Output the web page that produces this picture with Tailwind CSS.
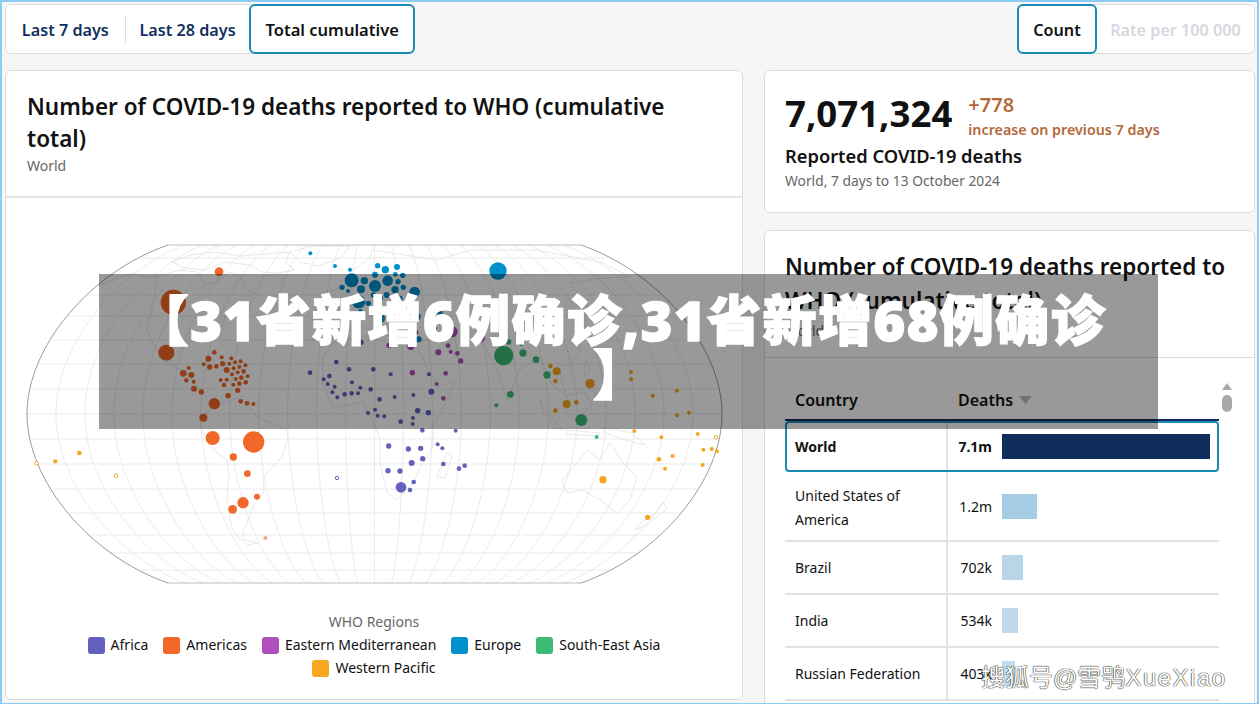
<!DOCTYPE html>
<html lang="en">
<head>
<meta charset="utf-8">
<title>COVID-19 deaths</title>
<script src="https://cdn.jsdelivr.net/npm/@tailwindcss/browser@4"></script>
</head>
<body class="m-0">
<div class="relative h-[704px] w-[1259px] overflow-hidden border-2 border-b-[1px] border-[#8ccbf3] bg-[#f6f6f7] pl-[3px] pr-[2px] pt-[2px] [font-family:'Noto_Sans','Noto_Sans_CJK_SC',sans-serif] text-[#111]">
  <div class="flex h-[50px] justify-between">
    <div class="flex h-full w-[410px] items-stretch rounded-md border border-[#dcdcdc] bg-white text-[16.2px] font-semibold text-[#12305e]">
      <div class="flex w-[119px] items-center justify-center pt-[2px]">Last 7 days</div>
      <div class="my-[10px] w-px bg-[#dcdcdc]"></div>
      <div class="flex w-[124px] items-center justify-center pt-[2px]">Last 28 days</div>
      <div class="-my-px -mr-px flex w-[166px] items-center justify-center rounded-md border-2 border-[#1b8bb5] bg-white pt-[2px] text-[16.5px] text-[#111]">Total cumulative</div>
    </div>
    <div class="flex h-full w-[238px] items-stretch rounded-md border border-[#dcdcdc] bg-white text-[16.2px] font-semibold">
      <div class="-my-px -ml-px flex w-[80px] items-center justify-center rounded-md border-2 border-[#1b8bb5] pt-[2px] text-[#111]">Count</div>
      <div class="flex flex-1 items-center justify-center pt-[2px] text-[#d5d8de]">Rate per 100 000</div>
    </div>
  </div>

  <div class="mt-[16px] flex items-start gap-[21px]">
    <!-- Left card -->
    <section class="h-[630px] w-[738px] shrink-0 rounded-md border border-[#dcdcdc] bg-white">
      <div class="h-[127px] border-b-2 border-[#e6e6e6] pl-[21px] pr-[60px] pt-[20px]">
        <h2 class="text-[22.5px] leading-[32px] font-semibold text-[#111]">Number of COVID-19 deaths reported to WHO (cumulative total)</h2>
        <p class="mt-[1px] text-[14px] leading-[20px] text-[#666]">World</p>
      </div>
      <svg class="block" width="736" height="414" viewBox="6 198 736 414" fill="none">
        <defs>
          <path id="m" d="M206.5 245C284.5 272 347.5 347 347.5 414C347.5 481 284.5 556 206.5 583" vector-effect="non-scaling-stroke"/>
        </defs>
        <g stroke="#e9e9e9" stroke-width="0.9">
          <path d="M374.5 245V583"/>
          <use href="#m" transform="translate(374.5 0) scale(.0833 1)"/><use href="#m" transform="translate(374.5 0) scale(-.0833 1)"/>
          <use href="#m" transform="translate(374.5 0) scale(.1667 1)"/><use href="#m" transform="translate(374.5 0) scale(-.1667 1)"/>
          <use href="#m" transform="translate(374.5 0) scale(.25 1)"/><use href="#m" transform="translate(374.5 0) scale(-.25 1)"/>
          <use href="#m" transform="translate(374.5 0) scale(.3333 1)"/><use href="#m" transform="translate(374.5 0) scale(-.3333 1)"/>
          <use href="#m" transform="translate(374.5 0) scale(.4167 1)"/><use href="#m" transform="translate(374.5 0) scale(-.4167 1)"/>
          <use href="#m" transform="translate(374.5 0) scale(.5 1)"/><use href="#m" transform="translate(374.5 0) scale(-.5 1)"/>
          <use href="#m" transform="translate(374.5 0) scale(.5833 1)"/><use href="#m" transform="translate(374.5 0) scale(-.5833 1)"/>
          <use href="#m" transform="translate(374.5 0) scale(.6667 1)"/><use href="#m" transform="translate(374.5 0) scale(-.6667 1)"/>
          <use href="#m" transform="translate(374.5 0) scale(.75 1)"/><use href="#m" transform="translate(374.5 0) scale(-.75 1)"/>
          <use href="#m" transform="translate(374.5 0) scale(.8333 1)"/><use href="#m" transform="translate(374.5 0) scale(-.8333 1)"/>
          <use href="#m" transform="translate(374.5 0) scale(.9167 1)"/><use href="#m" transform="translate(374.5 0) scale(-.9167 1)"/>
          <path d="M27 414H722M29 389H720M38 364H711M52 340H697M67 316H682M88 295H661M112 275H637M140 258H609"/>
          <path d="M29 439H720M38 464H711M52 489H697M68 513H681M88 535H661M110 553H639M138 570H611"/>
        </g>
        <!-- Coastlines -->
        <g stroke="#dedede" stroke-width="0.7" stroke-linejoin="round">
          <path d="M100 285L115 279 133 273 145 277 157 277 155 292 150 317 147 330 155 348 167 363 187 373 200 390 207 400 213 407 230 400 243 397 250 408 257 417 272 423 287 430 288 437 282 457 270 470 263 477 264 492 253 507 247 523 243 532 244 540 258 543 248 545 238 538 233 530 230 520 227 497 229 473 227 460 217 453 208 443 200 427 204 415 213 407"/>
          <path d="M167 363L177 353 187 343 200 338 213 337 222 325 227 313 240 303 253 293 245 288 240 275 228 272 217 282 205 285 198 272 180 270 157 277"/>
          <path d="M172 262L190 255 215 252 240 256 290 252 285 262 295 270 278 273 262 272 250 265 225 262 205 270 185 268Z"/>
          <path d="M323 357L333 343 350 338 363 337 380 334 413 340 427 367 438 387 457 380 447 400 433 427 433 447 423 463 413 483 397 500 387 493 380 463 380 437 370 417 363 402 333 408 323 383Z"/>
          <path d="M447 453L437 477 445 478 452 457Z"/>
          <path d="M562 480L577 463 587 450 600 460 610 443 623 463 637 477 630 500 617 513 600 500 583 490 567 493Z"/>
          <path d="M663 502L667 508 657 517 647 525 635 530 642 522 655 513Z"/>
          <path d="M313 320L322 296 345 285 350 272 370 258 372 250 437 260 470 250 537 250 603 263 630 277 600 278 570 283 587 305 587 317 577 330 580 353 568 366 557 363 567 397 552 384 540 357 520 370 507 400 497 370 483 343 465 340 457 358 440 340 413 340 395 328 360 328 345 332 325 322Z"/>
          <path d="M540 400L552 418 563 430 555 428 543 412ZM568 395L585 392 592 406 575 420 566 412ZM566 430L600 433 595 436 567 434ZM603 427L632 433 645 445 625 440 605 433ZM586 360L590 372 584 376ZM592 383L602 392 596 398Z"/>
          <path d="M290 252L312 246 350 246 340 258 318 266 300 262Z"/>
        </g>
        <!-- Outline -->
        <g stroke="#8f8f8f" stroke-width="0.9">
          <use href="#m" transform="translate(374.5 0)"/>
          <use href="#m" transform="translate(374.5 0) scale(-1 1)"/>
          <path d="M168 245H581M168 583H581" stroke="#b5b5b5"/>
        </g>

        <g transform="translate(0 230) scale(.33333)">
          <g fill="#f26829">
            <circle cx="657" cy="125" r="13"/><circle cx="520" cy="217" r="38"/><circle cx="499" cy="368" r="24"/><circle cx="723" cy="307" r="6"/>
            <circle cx="643" cy="367" r="7"/><circle cx="625" cy="386" r="9"/><circle cx="665" cy="382" r="6"/><circle cx="694" cy="385" r="6"/><circle cx="722" cy="394" r="6"/><circle cx="611" cy="403" r="6"/><circle cx="668" cy="401" r="8"/><circle cx="688" cy="401" r="6"/><circle cx="705" cy="397" r="6"/><circle cx="736" cy="406" r="6"/><circle cx="629" cy="411" r="8"/><circle cx="649" cy="409" r="7"/><circle cx="701" cy="415" r="6"/><circle cx="718" cy="411" r="6"/><circle cx="680" cy="420" r="9"/><circle cx="731" cy="424" r="7"/><circle cx="713" cy="427" r="6"/><circle cx="696" cy="433" r="6"/><circle cx="743" cy="439" r="6"/><circle cx="724" cy="443" r="7"/><circle cx="707" cy="447" r="6"/><circle cx="680" cy="449" r="6"/><circle cx="662" cy="450" r="6"/><circle cx="737" cy="457" r="7"/><circle cx="718" cy="461" r="7"/><circle cx="700" cy="464" r="6"/><circle cx="672" cy="465" r="7"/><circle cx="713" cy="481" r="8"/><circle cx="684" cy="497" r="8"/><circle cx="722" cy="514" r="7"/><circle cx="741" cy="520" r="7"/><circle cx="760" cy="522" r="6"/>
            <circle cx="566" cy="414" r="6"/><circle cx="550" cy="430" r="10"/><circle cx="574" cy="435" r="9"/><circle cx="559" cy="451" r="7"/><circle cx="581" cy="455" r="6"/><circle cx="582" cy="476" r="9"/><circle cx="604" cy="486" r="8"/><circle cx="643" cy="521" r="17"/><circle cx="610" cy="563" r="12"/>
            <circle cx="638" cy="624" r="21"/><circle cx="761" cy="636" r="32"/><circle cx="700" cy="681" r="11"/><circle cx="742" cy="731" r="10"/><circle cx="771" cy="800" r="9"/><circle cx="729" cy="818" r="17"/><circle cx="698" cy="838" r="13"/>
            <circle cx="796" cy="924" r="4" fill="#fff" stroke="#f26829" stroke-width="3"/>
          </g>
          <g fill="#f5a81f">
            <circle cx="238" cy="669" r="7"/><circle cx="166" cy="694" r="6.5"/>
            <circle cx="110" cy="700" r="5.5" fill="#fff" stroke="#f5a81f" stroke-width="3"/><circle cx="348" cy="737" r="5.5" fill="#fff" stroke="#f5a81f" stroke-width="3"/>
          </g>
        </g>

        <g transform="translate(300 240) scale(.33333)">
          <g fill="#0090cc">
            <circle cx="31" cy="40" r="6"/><circle cx="105" cy="78" r="6"/><circle cx="150" cy="89" r="6"/><circle cx="233" cy="77" r="8"/><circle cx="256" cy="89" r="11"/><circle cx="291" cy="81" r="9"/><circle cx="225" cy="104" r="9"/><circle cx="286" cy="103" r="7"/><circle cx="308" cy="106" r="8"/><circle cx="155" cy="121" r="21"/><circle cx="193" cy="122" r="11"/><circle cx="263" cy="122" r="16"/><circle cx="294" cy="125" r="8"/><circle cx="126" cy="142" r="8"/><circle cx="225" cy="138" r="18"/><circle cx="183" cy="148" r="12"/><circle cx="144" cy="153" r="6"/><circle cx="310" cy="142" r="8"/><circle cx="285" cy="149" r="11"/><circle cx="344" cy="156" r="16"/><circle cx="176" cy="185" r="20"/><circle cx="260" cy="165" r="9"/><circle cx="220" cy="165" r="8"/><circle cx="300" cy="175" r="8"/><circle cx="240" cy="175" r="9"/><circle cx="205" cy="190" r="8"/><circle cx="330" cy="200" r="14"/><circle cx="240" cy="235" r="15"/><circle cx="350" cy="230" r="12"/><circle cx="420" cy="218" r="8"/><circle cx="495" cy="212" r="5"/><circle cx="500" cy="170" r="4"/><circle cx="553" cy="212" r="5"/><circle cx="181" cy="213" r="6"/><circle cx="356" cy="298" r="9"/><circle cx="340" cy="258" r="7"/><circle cx="290" cy="180" r="8"/><circle cx="594" cy="93" r="26"/>
          </g>
          <g fill="#b04fbb">
            <circle cx="135" cy="280" r="8"/><circle cx="267" cy="316" r="8"/><circle cx="332" cy="319" r="11"/><circle cx="415" cy="337" r="9"/><circle cx="444" cy="317" r="7"/><circle cx="428" cy="298" r="7"/><circle cx="452" cy="335" r="6"/><circle cx="472" cy="340" r="7"/><circle cx="482" cy="363" r="8"/><circle cx="456" cy="275" r="17"/><circle cx="544" cy="294" r="11"/><circle cx="402" cy="268" r="9"/><circle cx="347" cy="277" r="8"/><circle cx="337" cy="398" r="8"/><circle cx="437" cy="400" r="7"/><circle cx="410" cy="432" r="6"/><circle cx="430" cy="475" r="7"/>
          </g>
          <g fill="#6361be">
            <circle cx="183" cy="307" r="8"/><circle cx="109" cy="366" r="7"/><circle cx="30" cy="398" r="7"/><circle cx="147" cy="388" r="7"/><circle cx="220" cy="388" r="7"/><circle cx="272" cy="403" r="6"/><circle cx="387" cy="403" r="6"/><circle cx="88" cy="408" r="7"/><circle cx="71" cy="418" r="6"/><circle cx="83" cy="432" r="6"/><circle cx="156" cy="427" r="6"/><circle cx="104" cy="440" r="6"/><circle cx="181" cy="443" r="6"/><circle cx="212" cy="448" r="7"/><circle cx="97" cy="457" r="6"/><circle cx="112" cy="472" r="6"/><circle cx="134" cy="463" r="7"/><circle cx="155" cy="460" r="7"/><circle cx="174" cy="460" r="6"/><circle cx="239" cy="478" r="7"/><circle cx="284" cy="471" r="6"/><circle cx="340" cy="465" r="6"/><circle cx="394" cy="455" r="9"/><circle cx="225" cy="509" r="6"/><circle cx="204" cy="519" r="6"/><circle cx="233" cy="527" r="6"/><circle cx="253" cy="529" r="6"/><circle cx="353" cy="512" r="8"/><circle cx="385" cy="518" r="8"/><circle cx="339" cy="534" r="6"/><circle cx="302" cy="545" r="7"/><circle cx="338" cy="552" r="6"/>
          </g>
        </g>

        <g transform="translate(370 230) scale(.33333)">
          <g fill="#6361be">
            <circle cx="157" cy="601" r="7"/><circle cx="257" cy="602" r="6"/><circle cx="56" cy="648" r="8"/><circle cx="115" cy="657" r="8"/><circle cx="152" cy="655" r="8"/><circle cx="203" cy="643" r="6"/><circle cx="217" cy="655" r="6"/><circle cx="158" cy="686" r="8"/><circle cx="125" cy="699" r="9"/><circle cx="220" cy="702" r="7"/><circle cx="54" cy="722" r="8"/><circle cx="90" cy="723" r="8"/><circle cx="284" cy="707" r="7"/><circle cx="267" cy="716" r="7"/><circle cx="93" cy="772" r="16"/><circle cx="131" cy="756" r="7"/><circle cx="120" cy="780" r="7"/>
            <circle cx="-99" cy="744" r="5" fill="#fff" stroke="#6361be" stroke-width="3"/>
          </g>
          <g fill="#3dbb75">
            <circle cx="401" cy="377" r="29"/><circle cx="531" cy="435" r="11"/><circle cx="634" cy="570" r="18"/><circle cx="680" cy="621" r="6"/><circle cx="498" cy="389" r="10"/><circle cx="459" cy="369" r="11"/><circle cx="421" cy="493" r="10"/><circle cx="379" cy="526" r="6"/><circle cx="416" cy="336" r="8"/><circle cx="454" cy="342" r="6"/>
          </g>
          <g fill="#f5a81f">
            <circle cx="541" cy="408" r="7"/><circle cx="560" cy="424" r="12"/><circle cx="556" cy="453" r="7"/><circle cx="631" cy="279" r="10"/><circle cx="680" cy="265" r="8"/><circle cx="505" cy="258" r="4"/><circle cx="505" cy="288" r="4"/><circle cx="660" cy="461" r="14"/><circle cx="590" cy="522" r="12"/><circle cx="619" cy="517" r="7"/><circle cx="556" cy="542" r="7"/><circle cx="783" cy="426" r="6"/><circle cx="783" cy="448" r="6"/><circle cx="848" cy="497" r="6"/><circle cx="921" cy="482" r="6"/><circle cx="921" cy="556" r="6"/><circle cx="957" cy="548" r="6"/><circle cx="793" cy="603" r="6"/><circle cx="874" cy="622" r="6"/><circle cx="983" cy="612" r="6"/><circle cx="1000" cy="659" r="6"/><circle cx="1025" cy="657" r="6"/><circle cx="1041" cy="664" r="6"/><circle cx="867" cy="688" r="7"/><circle cx="908" cy="678" r="6"/><circle cx="885" cy="716" r="6"/><circle cx="998" cy="705" r="6"/><circle cx="699" cy="749" r="11"/><circle cx="833" cy="862" r="8"/>
            <circle cx="1038" cy="622" r="5" fill="#fff" stroke="#f5a81f" stroke-width="3"/>
          </g>
        </g>
      </svg>
      <div class="flex flex-col items-center text-[14px] leading-[20px]">
        <div class="text-[#666]">WHO Regions</div>
        <div class="mt-[3px] flex flex-wrap justify-center gap-x-[15px] gap-y-[3px] w-[640px]">
          <span class="flex items-center gap-[6px]"><i class="h-[17px] w-[17px] rounded-[3px] bg-[#6361be]"></i>Africa</span>
          <span class="flex items-center gap-[6px]"><i class="h-[17px] w-[17px] rounded-[3px] bg-[#f26829]"></i>Americas</span>
          <span class="flex items-center gap-[6px]"><i class="h-[17px] w-[17px] rounded-[3px] bg-[#b04fbb]"></i>Eastern Mediterranean</span>
          <span class="flex items-center gap-[6px]"><i class="h-[17px] w-[17px] rounded-[3px] bg-[#0090cc]"></i>Europe</span>
          <span class="flex items-center gap-[6px]"><i class="h-[17px] w-[17px] rounded-[3px] bg-[#3dbb75]"></i>South-East Asia</span>
          <span class="flex items-center gap-[6px]"><i class="h-[17px] w-[17px] rounded-[3px] bg-[#f5a81f]"></i>Western Pacific</span>
        </div>
      </div>
    </section>

    <!-- Right column -->
    <div class="flex w-[491px] shrink-0 flex-col gap-[17px]">
      <section class="h-[143px] rounded-md border border-[#dcdcdc] bg-white px-[20px] pt-[19px]">
        <div class="flex items-start gap-[16px]">
          <div class="text-[36.6px] leading-[46px] font-bold text-[#111]">7,071,324</div>
          <div class="mt-[1px] text-[#b5683a]">
            <div class="text-[20px] leading-[28px] font-semibold">+778</div>
            <div class="mt-[1px] text-[14.3px] leading-[20px] font-semibold">increase on previous 7 days</div>
          </div>
        </div>
        <div class="mt-[3px] text-[18.3px] leading-[26px] font-semibold">Reported COVID-19 deaths</div>
        <div class="mt-[2px] text-[13.8px] leading-[20px] text-[#666]">World, 7 days to 13 October 2024</div>
      </section>

      <section class="h-[520px] rounded-md border border-[#dcdcdc] bg-white">
        <div class="h-[127px] border-b border-[#dcdcdc] px-[20px] pt-[19px]">
          <h2 class="text-[22.5px] leading-[34px] font-semibold">Number of COVID-19 deaths reported to WHO (cumulative total)</h2>
          <p class="mt-[3px] text-[14px] leading-[20px] text-[#666]">World</p>
        </div>
        <div class="relative pl-[20px] pt-[21px]">
          <div class="w-[434px] text-[14px]">
            <div class="flex h-[42px] items-center border-b-2 border-[#0f2c5c] pt-px text-[16px] font-semibold">
              <div class="w-[163px] pl-[10px]">Country</div>
              <div class="flex items-center gap-[6px] pl-[10px]">Deaths
                <svg width="13" height="8" viewBox="0 0 13 8"><path d="M0 0H13L6.5 8Z" fill="#bdbdbd"/></svg>
              </div>
            </div>
            <div class="flex h-[51px] items-stretch rounded-[4px] border-2 border-[#1b8bb5] font-bold">
              <div class="flex w-[161px] items-center border-r-2 border-[#e2e2e2] pl-[8px]">World</div>
              <div class="flex w-[44px] items-center justify-end">7.1m</div>
              <div class="ml-[10px] flex items-center"><div class="h-[25px] w-[208px] bg-[#0f2c5c]"></div></div>
            </div>
            <div class="flex h-[70px] items-stretch border-b-2 border-[#e2e2e2]">
              <div class="flex w-[163px] items-center border-r-2 border-[#e2e2e2] pl-[10px] pr-[20px] pt-[3px] leading-[24px]">United States of America</div>
              <div class="flex w-[44px] items-center justify-end pt-px">1.2m</div>
              <div class="ml-[10px] flex items-center pt-px"><div class="h-[25px] w-[35px] bg-[#a6cbe4]"></div></div>
            </div>
            <div class="flex h-[53px] items-stretch border-b-2 border-[#e2e2e2]">
              <div class="flex w-[163px] items-center border-r-2 border-[#e2e2e2] pl-[10px]">Brazil</div>
              <div class="flex w-[44px] items-center justify-end">702k</div>
              <div class="ml-[10px] flex items-center"><div class="h-[25px] w-[21px] bg-[#b9d5ea]"></div></div>
            </div>
            <div class="flex h-[53px] items-stretch border-b-2 border-[#e2e2e2]">
              <div class="flex w-[163px] items-center border-r-2 border-[#e2e2e2] pl-[10px]">India</div>
              <div class="flex w-[44px] items-center justify-end">534k</div>
              <div class="ml-[10px] flex items-center"><div class="h-[25px] w-[16px] bg-[#c0d8ec]"></div></div>
            </div>
            <div class="flex h-[53px] items-stretch border-b-2 border-[#e2e2e2]">
              <div class="flex w-[163px] items-center border-r-2 border-[#e2e2e2] pl-[10px]">Russian Federation</div>
              <div class="flex w-[44px] items-center justify-end">403k</div>
              <div class="ml-[10px] flex items-center"><div class="h-[25px] w-[13px] bg-[#c5dcee]"></div></div>
            </div>
          </div>
          <div class="absolute left-[457px] top-[25px] flex flex-col items-center gap-[5px]">
            <svg width="10" height="7" viewBox="0 0 10 7"><path d="M5 0L10 7H0Z" fill="#a9a9a9"/></svg>
            <div class="h-[17px] w-[10px] rounded-[5px] bg-[#a9a9a9]"></div>
          </div>
        </div>
      </section>
    </div>
  </div>

  <!-- Banner overlay -->
  <div class="absolute left-[97px] top-[272px] flex h-[155px] w-[1059px] items-center justify-center bg-black/40 pb-[9px] pr-[16px] text-center text-[54px] leading-[54px] font-black tracking-[1.5px] whitespace-nowrap text-white [font-family:'Noto_Sans','Noto_Sans_CJK_SC',sans-serif] [-webkit-text-stroke:1.5px_white]">
    <div>【31省新增6例确诊,31省新增68例确诊<br>】</div>
  </div>

  <!-- Watermark -->
  <div class="absolute left-[979px] top-[659px] text-[24px] leading-[34px] text-white [font-family:'Liberation_Sans','Noto_Sans_CJK_SC',sans-serif] [text-shadow:0_0_1px_#000,0_0_1px_#000]">搜狐号@雪鸮<span class="tracking-[1.5px]">XueXiao</span></div>
</div>
</body>
</html>
